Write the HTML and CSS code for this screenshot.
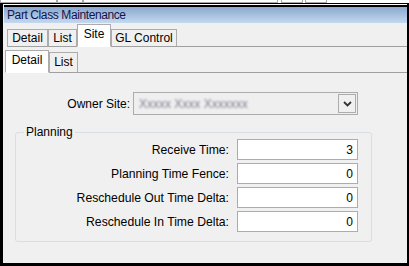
FILE: index.html
```html
<!DOCTYPE html>
<html lang="en">
<head>
    <meta charset="UTF-8">
    <title>Part Class Maintenance</title>
    <link rel="stylesheet" href="styles.css">
</head>
<body>
    <!-- Partial toolbar above the window -->
    <div class="toolstrip">
        <div class="seg seg-a"></div>
        <div class="seg seg-b"></div>
        <div class="seg seg-c"></div>
        <div class="seg seg-btn"></div>
        <div class="seg seg-btn"></div>
    </div>

    <div class="window">
        <div class="caption-gap"></div>
        <div class="caption">Part Class Maintenance</div>

        <!-- Main tabs -->
        <div class="tabs">
            <div class="tab tab-detail">Detail</div>
            <div class="tab tab-list">List</div>
            <div class="tab tab-site active">Site</div>
            <div class="tab tab-gl">GL Control</div>
        </div>

        <!-- Site sub tabs -->
        <div class="tabs subtabs">
            <div class="tab tab-detail active">Detail</div>
            <div class="tab tab-list">List</div>
        </div>

        <div class="owner-row">
            <label class="owner-label" for="ownerSite">Owner Site:</label>
            <div class="combo" id="ownerSite">
                <span class="combo-text">Xxxxx Xxxx Xxxxxxx</span>
                <span class="combo-btn">
                    <svg width="9" height="6" viewBox="0 0 9 6">
                        <path d="M1 1 L4.5 4.5 L8 1" fill="none" stroke="#333" stroke-width="1.8"/>
                    </svg>
                </span>
            </div>
        </div>

        <fieldset class="group">
            <legend>Planning</legend>
            <div class="fields">
                <label for="receiveTime">Receive Time:</label>
                <input type="text" id="receiveTime" value="3" readonly>

                <label for="timeFence">Planning Time Fence:</label>
                <input type="text" id="timeFence" value="0" readonly>

                <label for="outDelta">Reschedule Out Time Delta:</label>
                <input type="text" id="outDelta" value="0" readonly>

                <label for="inDelta">Reschedule In Time Delta:</label>
                <input type="text" id="inDelta" value="0" readonly>
            </div>
        </fieldset>
    </div>
</body>
</html>
```

FILE: styles.css
```css
/* Global */
body {
    margin: 0;
    width: 409px;
    height: 266px;
    overflow: hidden;
    font-family: "Liberation Sans", Arial, sans-serif;
    font-size: 12px;
    color: #000;
    background: #f0f0f0;
}

/* Toolbar remains at the top edge */
.toolstrip {
    display: flex;
    height: 3px;
    background: #fff;
}

.toolstrip .seg {
    box-sizing: border-box;
    height: 3px;
    border: 1px solid #a9a9a9;
    border-top: none;
    background: #fff;
}

.seg-a { width: 57px; }
.seg-b { width: 26px; }
.seg-c { width: 195px; margin-right: 3px; }
.seg-btn { width: 22px; margin-right: 2px; background: #f0f0f0; }

/* Window frame */
.window {
    box-sizing: border-box;
    height: 263px;
    border: 3px solid #000;
    border-top-width: 1px;
    border-right-width: 2px;
    padding-left: 1px;
    background: #f0f0f0;
}

.caption-gap {
    height: 1px;
    background: #fff;
}

.caption {
    height: 16px;
    border-top: 2px solid #000;
    padding-left: 3px;
    line-height: 16px;
    letter-spacing: -0.4px;
    color: #14144a;
    background: linear-gradient(#8aa7cd, #c4d9ef);
}

/* Tabs */
.tabs {
    display: flex;
    align-items: flex-end;
    height: 24px;
    padding-left: 3px;
}

.tabs::after {
    content: "";
    flex: 1;
    border-bottom: 1px solid #a0a0a0;
}

.tab {
    box-sizing: border-box;
    height: 18px;
    border: 1px solid #acacac;
    border-bottom-color: #a0a0a0;
    background: #f0f0f0;
    text-align: center;
    line-height: 16px;
}

.tab.active {
    height: 23px;
    padding-top: 2px;
    line-height: 14px;
    background: #fff;
    border-bottom-color: #fff;
}

.tab-detail { width: 41px; }
.tab-list { width: 29px; }
.tab-site { width: 34px; }
.tab-gl { width: 66px; }

.subtabs {
    height: 26px;
    padding-left: 1px;
}

.subtabs .tab {
    height: 21px;
    padding-top: 1px;
}

.subtabs .tab.active {
    height: 23px;
    padding-top: 2px;
}

.subtabs .tab-detail { width: 44px; }
.subtabs .tab-list { width: 29px; }

/* Owner site */
.owner-row {
    display: flex;
    align-items: center;
    margin-top: 19px;
}

.owner-label {
    width: 126px;
    margin-right: 3px;
    text-align: right;
}

.combo {
    box-sizing: border-box;
    display: flex;
    align-items: center;
    justify-content: space-between;
    width: 225px;
    height: 23px;
    padding: 0 1px 0 5px;
    border: 1px solid #acacac;
    background: #efefef;
}

.combo-text {
    color: #7e7e90;
    filter: blur(1.1px);
}

.combo-btn {
    box-sizing: border-box;
    display: flex;
    align-items: center;
    justify-content: center;
    width: 18px;
    height: 19px;
    border: 1px solid #acacac;
    background: #f0f0f0;
}

/* Planning group */
.group {
    box-sizing: border-box;
    width: 357px;
    margin: 10px 0 0 11px;
    padding: 0 13px 9px 0;
    border: 1px solid #d5dfe5;
    border-radius: 3px;
}

.group legend {
    margin-left: 8px;
    padding: 0 2px;
    line-height: 14px;
}

.fields {
    display: grid;
    grid-template-columns: 1fr 121px;
    column-gap: 8px;
    row-gap: 3px;
    align-items: center;
}

.fields label {
    text-align: right;
    font-size: 12.2px;
}

.fields input {
    box-sizing: border-box;
    height: 21px;
    margin: 0;
    padding: 0 4px 0 0;
    border: 1px solid #acacac;
    background: #fff;
    font-family: "Liberation Sans", Arial, sans-serif;
    font-size: 12px;
    text-align: right;
    outline: none;
}
```
